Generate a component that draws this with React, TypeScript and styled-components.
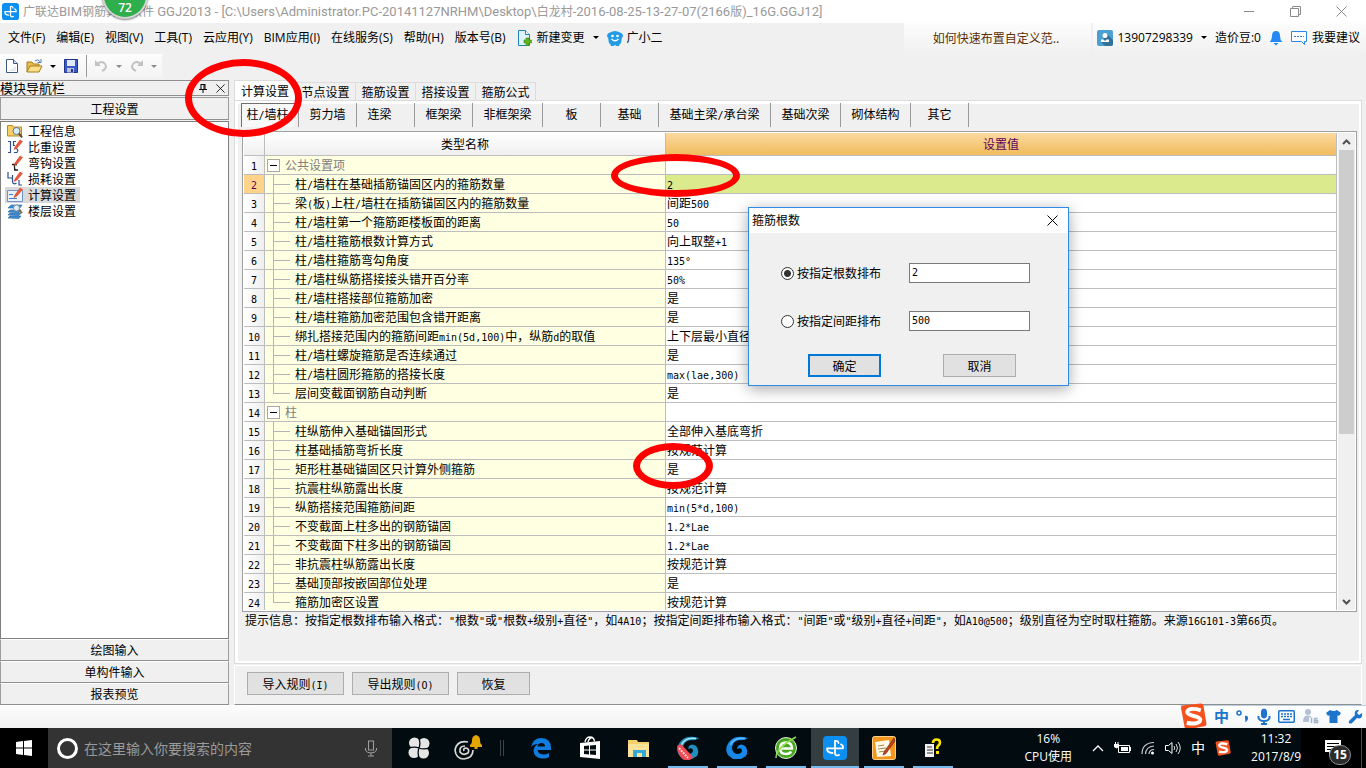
import React from "react";
import styled, { createGlobalStyle, css } from "styled-components";

const GlobalStyle = createGlobalStyle`
  * { box-sizing: border-box; }
  html, body { margin: 0; padding: 0; }
  body { overflow: hidden; }
  button, input { font-family: inherit; font-size: inherit; color: inherit; margin: 0; padding: 0; }
  button { background: none; border: 0; }
  svg { display: block; flex: none; }
`;

const uiFont = `"Open Sans", "Noto Sans CJK SC", sans-serif`;
const songFont = `"Noto Sans CJK SC", "Liberation Sans", sans-serif`;
const face = "#f0f0f0";

/* ---------- text helper: Latin runs sized apart from 12px hanzi ---------- */

const Latin = styled.span`
  font-family: "DejaVu Sans Mono", monospace;
  font-size: 10px;
  line-height: 0;
`;

const TitleLatin = styled.span`
  font-family: Roboto, sans-serif;
  font-size: 13px;
  line-height: 0;
`;

function Mixed({ text, as: Run = Latin }: { text: string; as?: React.ElementType }) {
  const parts = text.split(/([\x20-\x7e°]+)/).filter(Boolean);
  return (
    <>
      {parts.map((p, i) =>
        /^[\x20-\x7e°]+$/.test(p) ? <Run key={i}>{p}</Run> : <React.Fragment key={i}>{p}</React.Fragment>
      )}
    </>
  );
}

/* ---------- shell ---------- */

const Desktop = styled.div`
  position: relative;
  display: flex;
  flex-direction: column;
  height: 100vh;
  overflow: hidden;
  background: ${face};
  color: #000;
  font-family: ${songFont};
  font-size: 12px;
  line-height: 16px;
  white-space: nowrap;
  text-spacing-trim: space-all;
`;

const TitleBar = styled.header`
  display: flex;
  align-items: center;
  flex: none;
  height: 23px;
  padding: 0 18px 0 2px;
  gap: 4px;
  background: #fff;
  color: #999;
  font-family: ${uiFont};
`;

const TitleText = styled.h1`
  flex: 1;
  margin: 0;
  font-size: 12px;
  font-weight: 400;
  line-height: 16px;
`;

const WindowButtons = styled.div`
  display: flex;
  gap: 34px;
`;

const WindowButton = styled.button`
  width: 12px;
  height: 12px;
`;

const MenuBar = styled.nav`
  display: flex;
  align-items: center;
  flex: none;
  height: 29px;
  padding-left: 8px;
  gap: 11px;
  font-family: ${uiFont};
`;

const MenuItem = styled.button`
  display: flex;
  align-items: center;
  gap: 4px;
  line-height: 16px;
`;

const MenuGroup = styled.div`
  display: flex;
  align-items: center;
  gap: 8px;
`;

const MenuSpacer = styled.div`
  flex: 1;
`;

const TipLink = styled.a`
  align-self: stretch;
  display: flex;
  align-items: center;
  justify-content: center;
  width: 187px;
  margin-right: -9px;
  padding-right: 4px;
  background: linear-gradient(#fdfdfd, #f1f1f1);
  color: #5c2e00;
  font-family: ${songFont};
  text-decoration: none;
`;

const AccountBar = styled.div`
  align-self: stretch;
  display: flex;
  align-items: center;
  gap: 8px;
  padding: 0 6px 0 4px;
  background: linear-gradient(#fdfdfd, #f1f1f1);
`;

const Caret = styled.span<{ $dim?: boolean }>`
  width: 0;
  height: 0;
  border: 3px solid transparent;
  border-top-color: ${(p) => (p.$dim ? "#8c8c8c" : "#000")};
  border-bottom: 0;
`;

const ToolStrip = styled.div`
  display: flex;
  align-items: center;
  align-self: flex-start;
  flex: none;
  height: 24px;
  margin: 2px 0;
  padding: 0 5px;
  gap: 7px;
  background: linear-gradient(#fdfdfd, #f3f3f3);
`;

const ToolButton = styled.button`
  display: flex;
  align-items: center;
  gap: 7px;
`;

const ToolDivider = styled.span`
  width: 1px;
  height: 22px;
  background: #9a9a9a;
`;

const Workspace = styled.main`
  display: flex;
  flex: 1;
  min-height: 0;
`;

/* ---------- navigation panel ---------- */

const Sidebar = styled.aside`
  display: flex;
  flex-direction: column;
  flex: none;
  width: 229px;
`;

const SidebarTitle = styled.div`
  display: flex;
  align-items: center;
  flex: none;
  height: 16px;
  padding-right: 3px;
  gap: 9px;
  border: 1px solid #8f8f8f;
  border-left: 0;
  font-size: 13px;
`;

const SidebarTitleText = styled.span`
  flex: 1;
`;

const NavButton = styled.button`
  flex: none;
  height: 22px;
  border: 1px solid #9c9c9c;
  border-top-color: #fff;
  border-bottom-color: #8f8f8f;
  background: ${face};
  line-height: 16px;
`;

const NavHead = styled(NavButton)`
  height: 23px;
  margin: 1px 0;
  border-top-color: #9c9c9c;
`;

const TreeList = styled.ul`
  flex: 1;
  min-height: 0;
  margin: 0;
  padding: 1px 5px;
  overflow: hidden;
  list-style: none;
  background: #fff;
  border: 1px solid #7f7f7f;
`;

const TreeItem = styled.li<{ $on?: boolean }>`
  display: flex;
  align-items: center;
  width: 75px;
  height: 16px;
  gap: 5px;
  margin-left: -1px;
  padding-left: 2px;
  background: ${(p) => (p.$on ? "#d9d9d9" : "transparent")};
`;

/* ---------- main panel ---------- */

const Content = styled.section`
  display: flex;
  flex-direction: column;
  flex: 1;
  min-width: 0;
  margin-left: 5px;
  padding-right: 4px;
`;

const Tabs = styled.div`
  display: flex;
  align-items: flex-end;
  flex: none;
  height: 20px;
`;

const Tab = styled.button<{ $on?: boolean }>`
  width: 60px;
  height: 18px;
  border: 1px solid #dcdcdc;
  border-width: 1px 1px 0 0;
  line-height: 16px;
  ${(p) =>
    p.$on &&
    css`
      width: 62px;
      height: 20px;
      border-left-width: 1px;
      background: #fff;
    `}
`;

const Page = styled.div`
  display: flex;
  flex-direction: column;
  flex: 1;
  min-height: 0;
  padding: 0 4px 0 5px;
  border: 1px solid #dcdcdc;
  box-shadow: inset 3px 3px 0 #fff, inset -2px -2px 0 #fff;
`;

const SubTabs = styled.div`
  display: flex;
  flex: none;
  height: 24px;
  margin: 2px 0 4px;
  padding-left: 1px;
`;

const SubTab = styled.button<{ $w: number; $on?: boolean }>`
  width: ${(p) => p.$w}px;
  padding-bottom: 2px;
  border-right: 1px solid #9a9a9a;
  line-height: 16px;
  white-space: pre;
  ${(p) =>
    p.$on &&
    css`
      padding: 0 4px 2px 0;
      background: linear-gradient(#f8f8f8, #f8f8f8) 0 0 / 53px 100% no-repeat;
      box-shadow: inset 1px 1px 0 #707070;
    `}
`;

const GridFrame = styled.div`
  display: flex;
  flex: 1;
  min-height: 0;
  margin: 0 0 0 2px;
  padding: 1px;
  border: 1px solid #a0a0a0;
  background: #fff;
`;

const GridView = styled.div`
  flex: 1;
  min-width: 0;
  overflow: hidden;
`;

const Table = styled.table`
  width: 100%;
  table-layout: fixed;
  border-collapse: separate;
  border-spacing: 0;
`;

const HeadCell = styled.th<{ $hot?: boolean }>`
  height: 23px;
  padding: 0;
  border: 1px solid #bdbdbd;
  border-width: 0 1px 1px 0;
  background: ${(p) => (p.$hot ? "linear-gradient(#fbd9a0, #f0bc5c)" : "linear-gradient(#fff, #efefef)")};
  color: ${(p) => (p.$hot ? "#600060" : "#000")};
  font-weight: 400;
`;

const cell = css`
  height: 19px;
  padding: 0;
  border: 1px solid #bdbdbd;
  border-width: 0 1px 1px 0;
  line-height: 16px;
  text-align: left;
  font-weight: 400;
  overflow: hidden;
`;

const NumCell = styled.th<{ $on?: boolean }>`
  ${cell}
  text-align: center;
  background: ${(p) => (p.$on ? "#ffd38a" : "linear-gradient(90deg, #fff, #efefef)")};
  color: ${(p) => (p.$on ? "#600060" : "#000")};
`;

const NameCell = styled.td`
  ${cell}
  background: #ffffe1;
`;

const ValueCell = styled.td<{ $on?: boolean }>`
  ${cell}
  padding-left: 1px;
  background: ${(p) => (p.$on ? "#dbea8d" : "#fff")};
`;

const NameRow = styled.div`
  display: flex;
  align-items: center;
  height: 18px;
`;

const Branch = styled.span<{ $last?: boolean }>`
  align-self: stretch;
  width: 17px;
  margin: 0 5px 0 8px;
  background:
    linear-gradient(#b4b4b4, #b4b4b4) 0 0 / 1px ${(p) => (p.$last ? "10px" : "100%")} no-repeat,
    linear-gradient(#b4b4b4, #b4b4b4) 0 9px / 17px 1px no-repeat;
`;

const Toggle = styled.button`
  display: flex;
  align-items: center;
  justify-content: center;
  width: 13px;
  height: 13px;
  margin: 0 5px 0 2px;
  border: 1px solid #a8a8a8;
  background: #fff;
`;

const ToggleBar = styled.span`
  width: 7px;
  height: 1px;
  background: #000;
`;

const GroupName = styled.span`
  color: #808080;
`;

const ScrollBar = styled.div`
  display: flex;
  flex-direction: column;
  flex: none;
  width: 17px;
  margin-left: 1px;
  background: #f0f0f0;
`;

const ScrollButton = styled.button`
  display: flex;
  align-items: center;
  justify-content: center;
  flex: none;
  height: 17px;
`;

const ScrollTrack = styled.div`
  flex: 1;
`;

const ScrollThumb = styled.div`
  height: 64%;
  margin: 0 1px;
  background: #cdcdcd;
`;

const Hint = styled.p`
  flex: none;
  height: 51px;
  margin: 0;
  padding-left: 5px;
`;

const ActionBar = styled.div`
  display: flex;
  flex: none;
  height: 40px;
  margin-top: 1px;
  padding: 6px 12px;
  gap: 8px;
  border: 1px solid #fff;
  border-bottom-color: #8f8f8f;
`;

const PushButton = styled.button<{ $w: number; $primary?: boolean }>`
  width: ${(p) => p.$w}px;
  height: 23px;
  border: ${(p) => (p.$primary ? "2px solid #0078d7" : "1px solid #adadad")};
  background: #e1e1e1;
  line-height: 16px;
`;

/* ---------- dialog ---------- */

const Dialog = styled.form`
  position: absolute;
  left: 748px;
  top: 207px;
  width: 321px;
  border: 1px solid #2f8be6;
  background: ${face};
  box-shadow: 0 3px 14px rgba(0, 0, 0, 0.35);
`;

const DialogTitle = styled.div`
  display: flex;
  align-items: center;
  justify-content: space-between;
  height: 25px;
  padding: 0 9px 0 3px;
  background: #fff;
  font-family: ${uiFont};
`;

const DialogBody = styled.div`
  display: flex;
  flex-direction: column;
  gap: 28px;
  padding: 30px 38px 23px 32px;
`;

const Field = styled.div`
  display: flex;
  align-items: center;
  justify-content: space-between;
`;

const RadioLabel = styled.label`
  display: flex;
  align-items: center;
  gap: 3px;
`;

const Radio = styled.input`
  appearance: none;
  width: 13px;
  height: 13px;
  border: 1px solid #333;
  border-radius: 50%;
  background: #fff;
  &:checked {
    background: radial-gradient(circle, #333 3px, #fff 4px);
  }
`;

const TextBox = styled.input`
  width: 121px;
  height: 20px;
  padding: 0 0 2px 2px;
  border: 1px solid #7a7a7a;
  background: #fff;
  font-family: "DejaVu Sans Mono", monospace;
  font-size: 10px;
`;

const DialogActions = styled.div`
  display: flex;
  gap: 62px;
  padding: 0 0 8px 59px;
`;

/* ---------- input method strip ---------- */

const StatusStrip = styled.div`
  display: flex;
  justify-content: flex-end;
  flex: none;
  height: 23px;
  background: linear-gradient(#fdfdfd, #f0f0f0);
`;

const ImeBar = styled.div`
  display: flex;
  align-items: center;
  gap: 7px;
  padding: 0 3px 2px 0;
  border-top: 1px solid #b9cfe4;
  background: linear-gradient(#fff, #f4f6f8);
  color: #1c74cc;
  font-size: 15px;
  font-weight: 700;
`;

/* ---------- task bar ---------- */

const TaskBar = styled.footer`
  display: flex;
  flex: none;
  height: 40px;
  background: #020c10;
  color: #fff;
  font-family: ${uiFont};
`;

const StartButton = styled.button`
  display: flex;
  align-items: center;
  justify-content: center;
  width: 48px;
  background: #000;
`;

const SearchBox = styled.label`
  display: flex;
  align-items: center;
  width: 344px;
  padding: 0 14px 0 8px;
  gap: 5px;
  background: #333;
`;

const SearchInput = styled.input`
  flex: 1;
  min-width: 0;
  border: 0;
  outline: 0;
  background: none;
  font-size: 14px;
  &::placeholder {
    color: #9a9a9a;
    opacity: 1;
  }
`;

const Apps = styled.div`
  display: flex;
  gap: 1px;
  padding-left: 3px;
`;

const AppButton = styled.button<{ $active?: boolean; $open?: boolean }>`
  display: flex;
  align-items: center;
  justify-content: center;
  width: 48px;
  background: ${(p) => (p.$active ? "#343d40" : "transparent")};
  ${(p) =>
    p.$open &&
    css`
      background-image: linear-gradient(#76b9ed, #76b9ed);
      background-size: ${p.$active ? "48px" : "40px"} 2px;
      background-position: bottom center;
      background-repeat: no-repeat;
    `}
`;

const AppDivider = styled.span`
  align-self: center;
  width: 4px;
  height: 16px;
  margin: 0 12px 0 7px;
  border: 1px solid #3c4447;
  border-width: 0 1px;
`;

const TaskSpacer = styled.div`
  flex: 1;
`;

const TwoLines = styled.div`
  align-self: center;
  text-align: center;
  line-height: 18px;
`;

const Tray = styled.div`
  display: flex;
  align-items: center;
  gap: 10px;
  padding: 0 20px;
`;

const TrayText = styled.span`
  font-size: 14px;
`;

const Notice = styled.button`
  position: relative;
  display: flex;
  align-items: center;
  width: 65px;
  padding-left: 24px;
  background: #000;
  box-shadow: inset -4px 0 0 #000, inset -5px 0 0 #4a4a4a;
`;

const NoticeCount = styled.span`
  position: absolute;
  left: 28px;
  top: 17px;
  width: 22px;
  height: 20px;
  border: 1px solid #8f8f8f;
  border-radius: 10px;
  background: #2b2b2b;
  font-size: 12px;
  font-weight: 700;
  line-height: 18px;
  text-align: center;
`;

/* ---------- overlays ---------- */

const SpeedBall = styled.div`
  position: absolute;
  left: 102px;
  top: -28px;
  display: flex;
  align-items: flex-end;
  justify-content: center;
  width: 46px;
  height: 47px;
  padding-bottom: 1px;
  border: 2px solid #d5d5d5;
  border-radius: 50%;
  background: #2fae4c;
  box-shadow: 0 1px 2px rgba(0, 0, 0, 0.5);
  color: #fff;
  font-family: ${uiFont};
  font-weight: 600;
`;

const Ring = styled.div<{ $x: number; $y: number; $w: number; $h: number }>`
  position: absolute;
  left: ${(p) => p.$x}px;
  top: ${(p) => p.$y}px;
  width: ${(p) => p.$w}px;
  height: ${(p) => p.$h}px;
  border: 7px solid #f00;
  border-radius: 50%;
  pointer-events: none;
`;

/* ---------- drawings ---------- */

const AppLogo = ({ size }: { size: number }) => (
  <svg width={size} height={size} viewBox="0 0 24 24">
    <rect width="24" height="24" rx="4" fill="#0b8ff0" />
    <path d="M15.500 7Q15.500 4.500 12 5V17q0 3.500 4 2M4 12.300H20M4 12.300q0 4.700 5.500 4.700M20 12.300q.3-3.300-2-4" fill="none" stroke="#fff" strokeWidth="1.800" strokeLinecap="round" />
  </svg>
);

const NewDocIcon = () => (
  <svg width="14" height="16" viewBox="0 0 14 16">
    <path d="M1.500 1.500h7l4 4v9h-11z" fill="#fff" stroke="#3c5a7c" />
    <path d="M8.500 1.500v4h4" fill="#cfe0f2" stroke="#3c5a7c" />
    <path d="M3 13h8V8z" fill="#e4edf6" />
  </svg>
);

const OpenIcon = () => (
  <svg width="17" height="16" viewBox="0 0 17 16">
    <path d="M1 14V4h5l1.500 2H13v3" fill="#e8bc4c" stroke="#a97b1b" />
    <path d="M1 14L4 8h12l-3 6z" fill="#fbe08c" stroke="#a97b1b" />
    <path d="M9 3q3-2.500 5 .5M15 1v3.500h-3.500" fill="none" stroke="#4d7fb5" />
  </svg>
);

const SaveIcon = () => (
  <svg width="16" height="16" viewBox="0 0 16 16">
    <path d="M1.500 1.500h13v13h-13z" fill="#3b58c8" stroke="#22338a" />
    <path d="M4 2h8v6H4z" fill="#dfe9fa" />
    <path d="M4 10h7v4.500H4z" fill="#b9c4dc" />
    <path d="M8 11h2v3H8z" fill="#22338a" />
  </svg>
);

const UndoIcon = ({ flip }: { flip?: boolean }) => (
  <svg width="15" height="14" viewBox="0 0 15 14">
    <g transform={flip ? "translate(15 0) scale(-1 1)" : undefined}>
      <path d="M3 5q5-4 8 0t-3 7" fill="none" stroke="#c2c2c2" strokeWidth="2" />
      <path d="M1 1v6h6z" fill="#c2c2c2" />
    </g>
  </svg>
);

const NewChangeIcon = () => (
  <svg width="16" height="16" viewBox="0 0 16 16">
    <path d="M1.500.5h7l4 4v11h-11z" fill="#dff1fb" stroke="#1f83b8" />
    <path d="M8.500.5v4h4" fill="#fff" stroke="#1f83b8" />
    <path d="M9 8h3v2h2.500v3H12v2.500H9V13H7v-3h2z" fill="#5fb321" stroke="#3c8a12" strokeWidth=".6" />
  </svg>
);

const MascotIcon = () => (
  <svg width="16" height="16" viewBox="0 0 16 16">
    <path d="M3 2.500Q8-.5 13 2.500q3 1 3 3.500l-1.500 3q.5 4-2 5.500L12 16H9.500L8 15l-1.500 1H4l-.5-1.500Q1 13 1.500 9L0 6q0-2.500 3-3.500z" fill="#239be6" />
    <circle cx="5.500" cy="6" r="1.300" fill="#fff" />
    <circle cx="10.500" cy="6" r="1.300" fill="#fff" />
    <path d="M4.500 9q3.500 3.500 7 0" fill="none" stroke="#fff" strokeWidth="1.200" />
  </svg>
);

const UserIcon = () => (
  <svg width="16" height="16" viewBox="0 0 16 16">
    <rect width="16" height="16" rx="2" fill="#4b9fd2" />
    <path d="M10 4l6 6v4q0 2-2 2H8l-4-4z" fill="#32739b" />
    <circle cx="8" cy="5.500" r="2.500" fill="#fff" />
    <path d="M4 12V9.500h2.500L8 11l1.500-1.500H12V12z" fill="#fff" />
  </svg>
);

const BellIcon = () => (
  <svg width="14" height="16" viewBox="0 0 14 16">
    <path d="M7 1q4 0 4 5 0 4 2.500 6H.5Q3 10 3 6q0-5 4-5zM4.500 13h5L7 15.500z" fill="#2488f5" />
  </svg>
);

const ChatIcon = () => (
  <svg width="17" height="16" viewBox="0 0 17 16">
    <path d="M.5 1.500h15v10h-2v3l-3-3H.500z" fill="#fff" stroke="#2d86e8" />
    <path d="M3 6.500h10" stroke="#2d86e8" strokeDasharray="2 1" />
  </svg>
);

const Pencil = () => <path d="M8 8L13 1l2.500 1.500L10 9l-3 1.500z" fill="#f0553a" stroke="#b93820" strokeWidth=".5" />;

const treeIcons: Record<string, React.ReactNode> = {
  info: (
    <>
      <path d="M.5 2.500h5l1 1.500h8v9H.5z" fill="#f6cf62" stroke="#b98a20" />
      <circle cx="9.500" cy="8" r="3.500" fill="#dbeafa" stroke="#5577a8" />
      <path d="M12 10.500l3 4" stroke="#5a4630" strokeWidth="2" />
    </>
  ),
  ratio: (
    <>
      <path d="M1 2.500h2.500v11H1M9 2.500H6.500v4H8M7 13.500h3q2-3-1-4" fill="none" stroke="#2f4f8c" strokeWidth="1.200" />
      <Pencil />
    </>
  ),
  hook: (
    <>
      <path d="M7.500 9v4q0 2 2 2M5 9.500h5M7 15h4" fill="none" stroke="#222" strokeWidth="1.300" />
      <Pencil />
    </>
  ),
  loss: (
    <>
      <path d="M1 1v6h4M5.500 4v7q1 3 4 1M12 9v5h3" fill="none" stroke="#2f4f8c" strokeWidth="1.200" />
      <Pencil />
    </>
  ),
  calc: (
    <>
      <path d="M.5 3.500h15v11H.5z" fill="#e8f1fc" stroke="#6f93c8" />
      <path d="M2 7.500h4M2 11.500h8" stroke="#4b79bf" />
      <Pencil />
    </>
  ),
  floor: (
    <>
      <path d="M1 5l3-3h11l-2 3zM1 9l2-2h11l-2 2.500zM1 12l2-2h11l-2 2.500zM1 15l2-2h11l-2 2.500z" fill="#3f8fd4" stroke="#23639f" strokeWidth=".6" />
      <circle cx="9.500" cy="5" r="3" fill="#e2effa" stroke="#7b93ab" />
      <path d="M12 7l3 3" stroke="#8a6a3a" strokeWidth="2" />
    </>
  ),
};

const TreeIcon = ({ kind }: { kind: string }) => (
  <svg width="16" height="16" viewBox="0 0 16 16">
    {treeIcons[kind]}
  </svg>
);

const CloseIcon = ({ size, color }: { size: number; color: string }) => (
  <svg width={size} height={size} viewBox="0 0 11 11">
    <path d="M.5.5l10 10M10.500.5l-10 10" stroke={color} />
  </svg>
);

const PinIcon = () => (
  <svg width="8" height="9" viewBox="0 0 8 9">
    <path d="M2 0v5M5 0v5M2 .5h4M0 5.500h8M4 5v4M6 0v5" fill="none" stroke="#000" />
  </svg>
);

const Chevron = ({ down }: { down?: boolean }) => (
  <svg width="9" height="6" viewBox="0 0 9 6">
    <path d={down ? "M1 1l3.500 3.500L8 1" : "M1 5l3.500-3.500L8 5"} fill="none" stroke="#505050" strokeWidth="2" />
  </svg>
);

const SogouLogo = ({ size }: { size: number }) => (
  <svg width={size} height={size} viewBox="0 0 26 26">
    <path d="M1 5q-.5-2 1.500-2.500L20 .5q2 0 2.500 1.500L25.500 20q0 2-2 2.500L7 25.500q-2 0-2.500-2z" fill="#f4511e" />
    <path d="M20 7C14 5 6.500 5 7 9S19 12 19.500 16 12 20.500 6.500 19" fill="none" stroke="#fff" strokeWidth="3.800" />
  </svg>
);

const imeBlue = "#1c74cc";

const MicIcon = ({ color, filled }: { color: string; filled?: boolean }) => (
  <svg width="14" height="17" viewBox="0 0 14 17">
    <rect x="4.500" y="1" width="5" height="9" rx={filled ? 2.5 : 0} fill={filled ? color : "none"} stroke={color} />
    <path d="M1.500 8v2q1 3 5.500 3t5.500-3V8M7 13v3M4 16h6" fill="none" stroke={color} strokeWidth={filled ? 2 : 1} />
  </svg>
);

const WindowsIcon = () => (
  <svg width="16" height="16" viewBox="0 0 16 16">
    <path d="M0 2l7-1v6.500H0zM8 1l8-1v7.500H8zM0 8.500h7V15l-7-1zM8 8.500h8V16l-8-1z" fill="#fff" />
  </svg>
);

const FanIcon = () => (
  <svg width="22" height="22" viewBox="0 0 22 22">
    <g fill="#e6e6e6">
      <circle cx="6.500" cy="6" r="5.500" />
      <circle cx="16" cy="6.500" r="5.500" />
      <circle cx="15.500" cy="16" r="5.500" />
      <circle cx="6" cy="15.500" r="5.500" />
      <path d="M7 7h8v8H7z" />
    </g>
    <path
      d="M11 11Q13 6 10.500 0M11 11Q16 13 22 10.500M11 11Q9 16 11.500 22M11 11Q6 9 0 11.500"
      fill="none"
      stroke="#020c10"
      strokeWidth="1.300"
    />
  </svg>
);

const SwirlBellIcon = () => (
  <svg width="30" height="28" viewBox="0 0 30 28">
    <path d="M15 8Q4 6 2 16q1 9 9 9 9-1 9-9M12 12q-6 0-5 6 3 4 8 1 2-4-2-5-3 0-2 3" fill="none" stroke="#d8d8d8" strokeWidth="1.700" />
    <path d="M17 11q2-1 2-5t4-5q4 1 4 5t2 5v2H17zM21.500 13h3v2h-3z" fill="#e3a500" />
  </svg>
);

const EdgeIcon = () => (
  <svg width="22" height="22" viewBox="0 0 22 22">
    <path d="M1 10Q3 1 11.500 1 21 1.500 21 11v2H7.500q.5 4 6 4.500 3 0 5.500-1.500v4q-3 2-7 1.500-8-.5-8.500-8Q4 9 8 7q-5 0-7 3zM7.500 9.500H15Q15 6 11.500 6 8 6 7.500 9.500z" fill="#0f7ce0" />
  </svg>
);

const StoreIcon = () => (
  <svg width="22" height="24" viewBox="0 0 22 24">
    <path d="M1 7l20-2v18L1 21z" fill="#fff" />
    <path d="M6 6q1-5 5-5 4 0 4.500 4.500M9 6q1-4 4-4.500" fill="none" stroke="#fff" strokeWidth="1.300" />
    <path d="M5 10l5-.5v4H5zM11 9.500l6-.5v4.500h-6zM5 14.500h5v4l-5-.5zM11 14.500h6V19l-6-.5z" fill="#020c10" />
  </svg>
);

const ExplorerIcon = () => (
  <svg width="22" height="19" viewBox="0 0 22 19">
    <path d="M0 1h9l1 2h11v15H0z" fill="#f5cf6c" />
    <path d="M0 5h21v13H0z" fill="#fde398" />
    <path d="M5 18v-7h13v7h-4v-4H9v4z" fill="#36a7dd" />
  </svg>
);

const WaveG = ({ sash }: { sash?: boolean }) => (
  <svg width="24" height="24" viewBox="0 0 24 24">
    <path d="M23 2Q10-2 4 6-1 13 3 19l5 4h8l5-3q3-6-1-10-4-3-7 0l-1 3q4-2 5 1 0 4-5 4-5-1-5-7Q8 5 15 4q4 1 8-2z" fill={sash ? "#1f8fc0" : "#1788e8"} />
    <path d="M20 2.500Q9 1 5.500 9" fill="none" stroke={sash ? "#a6e4ee" : "#62bdff"} strokeWidth="1.500" />
    {sash && <path d="M1 10l4-2 12 13-3 3H8Q2 21 1 10z" fill="#ef4b56" />}
    {sash && <path d="M3 12l9 10" stroke="#ffd5d8" strokeWidth="2" strokeDasharray="2 1" />}
  </svg>
);

const GreenBrowserIcon = () => (
  <svg width="24" height="24" viewBox="0 0 24 24">
    <circle cx="12" cy="12" r="10.500" fill="#47a51f" stroke="#dff0d4" />
    <path d="M6 12.500h12Q18 6.500 12 6.500T6 12.500q0 5.500 6 5.500 4 0 5-2.500" fill="none" stroke="#fff" strokeWidth="2.500" />
    <path d="M2 22Q2 12 22 1" fill="none" stroke="#8ee04e" strokeWidth="1.500" />
  </svg>
);

const NotesIcon = () => (
  <svg width="24" height="24" viewBox="0 0 24 24">
    <rect x=".5" y=".5" width="23" height="23" rx="2" fill="#f5961c" stroke="#ffd08a" />
    <path d="M3 6l14-2 2 16-14 1z" fill="#fffbe8" />
    <path d="M6 10l6-1M6 13l8-1M7 16l6-1" stroke="#a8854b" />
    <path d="M22 2L12 16l-1 3 3-1.500L23 5z" fill="#c2451c" stroke="#5c200c" strokeWidth=".6" />
  </svg>
);

const HelpDocIcon = () => (
  <svg width="18" height="20" viewBox="0 0 18 20">
    <path d="M1 6h9v13H1z" fill="#f2f2f2" />
    <path d="M3 9h5M3 12h6M3 15h6" stroke="#333" />
    <path d="M9 5q0-3.500 3.500-3.500T16 4.500q0 2-2 3.500-1 1-1 3" fill="none" stroke="#ffe600" strokeWidth="2.600" />
    <path d="M12 13h3v3h-3z" fill="#ffe600" />
  </svg>
);

/* ---------- data ---------- */

const title =
  "广联达BIM钢筋算量软件 GGJ2013 - [C:\\Users\\Administrator.PC-20141127NRHM\\Desktop\\白龙村-2016-08-25-13-27-07(2166版)_16G.GGJ12]";

const menus = ["文件(F)", "编辑(E)", "视图(V)", "工具(T)", "云应用(Y)", "BIM应用(I)", "在线服务(S)", "帮助(H)", "版本号(B)"];

const treeItems = [
  { kind: "info", text: "工程信息" },
  { kind: "ratio", text: "比重设置" },
  { kind: "hook", text: "弯钩设置" },
  { kind: "loss", text: "损耗设置" },
  { kind: "calc", text: "计算设置" },
  { kind: "floor", text: "楼层设置" },
];

const tabs = ["计算设置", "节点设置", "箍筋设置", "搭接设置", "箍筋公式"];

const subTabs: [string, number][] = [
  ["柱/墙柱", 58],
  ["剪力墙", 58],
  ["连梁  ", 58],
  ["框架梁", 58],
  ["非框架梁", 70],
  ["板", 58],
  ["基础", 58],
  ["基础主梁/承台梁", 112],
  ["基础次梁", 70],
  ["砌体结构", 70],
  ["其它", 58],
];

type Row = { name: string; value?: string; group?: boolean; last?: boolean };

const rows: Row[] = [
  { name: "公共设置项", group: true },
  { name: "柱/墙柱在基础插筋锚固区内的箍筋数量", value: "2" },
  { name: "梁(板)上柱/墙柱在插筋锚固区内的箍筋数量", value: "间距500" },
  { name: "柱/墙柱第一个箍筋距楼板面的距离", value: "50" },
  { name: "柱/墙柱箍筋根数计算方式", value: "向上取整+1" },
  { name: "柱/墙柱箍筋弯勾角度", value: "135°" },
  { name: "柱/墙柱纵筋搭接接头错开百分率", value: "50%" },
  { name: "柱/墙柱搭接部位箍筋加密", value: "是" },
  { name: "柱/墙柱箍筋加密范围包含错开距离", value: "是" },
  { name: "绑扎搭接范围内的箍筋间距min(5d,100)中，纵筋d的取值", value: "上下层最小直径" },
  { name: "柱/墙柱螺旋箍筋是否连续通过", value: "是" },
  { name: "柱/墙柱圆形箍筋的搭接长度", value: "max(lae,300)" },
  { name: "层间变截面钢筋自动判断", value: "是", last: true },
  { name: "柱", group: true },
  { name: "柱纵筋伸入基础锚固形式", value: "全部伸入基底弯折" },
  { name: "柱基础插筋弯折长度", value: "按规范计算" },
  { name: "矩形柱基础锚固区只计算外侧箍筋", value: "是" },
  { name: "抗震柱纵筋露出长度", value: "按规范计算" },
  { name: "纵筋搭接范围箍筋间距", value: "min(5*d,100)" },
  { name: "不变截面上柱多出的钢筋锚固", value: "1.2*Lae" },
  { name: "不变截面下柱多出的钢筋锚固", value: "1.2*Lae" },
  { name: "非抗震柱纵筋露出长度", value: "按规范计算" },
  { name: "基础顶部按嵌固部位处理", value: "是" },
  { name: "箍筋加密区设置", value: "按规范计算", last: true },
];

const selectedRow = 1;

const hint =
  '提示信息：按指定根数排布输入格式："根数"或"根数+级别+直径"，如4A10；按指定间距排布输入格式："间距"或"级别+直径+间距"，如A10@500；级别直径为空时取柱箍筋。来源16G101-3第66页。';

/* ---------- sections ---------- */

const Header = () => (
  <>
    <TitleBar>
      <AppLogo size={17} />
      <TitleText>
        <Mixed text={title} as={TitleLatin} />
      </TitleText>
      <WindowButtons>
        <WindowButton aria-label="最小化">
          <svg width="11" height="11" viewBox="0 0 11 11">
            <path d="M0 5.500h10" stroke="#8a8a8a" />
          </svg>
        </WindowButton>
        <WindowButton aria-label="还原">
          <svg width="11" height="11" viewBox="0 0 11 11">
            <path d="M.5 2.500h8v8h-8zM2.500 2.500v-2h8v8h-2" fill="none" stroke="#8a8a8a" />
          </svg>
        </WindowButton>
        <WindowButton aria-label="关闭">
          <CloseIcon size={11} color="#8a8a8a" />
        </WindowButton>
      </WindowButtons>
    </TitleBar>
    <MenuBar>
      {menus.map((m) => (
        <MenuItem key={m}>{m}</MenuItem>
      ))}
      <MenuGroup>
        <MenuItem>
          <NewChangeIcon />
          新建变更
        </MenuItem>
        <Caret />
        <MenuItem>
          <MascotIcon />
          广小二
        </MenuItem>
      </MenuGroup>
      <MenuSpacer />
      <TipLink href="#tip">如何快速布置自定义范..</TipLink>
      <AccountBar>
        <MenuItem>
          <UserIcon />
          13907298339
        </MenuItem>
        <Caret />
        <MenuItem>造价豆:0</MenuItem>
        <BellIcon />
        <MenuItem>
          <ChatIcon />
          我要建议
        </MenuItem>
      </AccountBar>
    </MenuBar>
    <ToolStrip>
      <ToolButton aria-label="新建">
        <NewDocIcon />
      </ToolButton>
      <ToolButton aria-label="打开">
        <OpenIcon />
        <Caret />
      </ToolButton>
      <ToolButton aria-label="保存">
        <SaveIcon />
      </ToolButton>
      <ToolDivider />
      <ToolButton aria-label="撤销">
        <UndoIcon />
        <Caret $dim />
      </ToolButton>
      <ToolButton aria-label="恢复操作">
        <UndoIcon flip />
        <Caret $dim />
      </ToolButton>
    </ToolStrip>
  </>
);

const Navigator = () => (
  <Sidebar>
    <SidebarTitle>
      <SidebarTitleText>模块导航栏</SidebarTitleText>
      <PinIcon />
      <CloseIcon size={9} color="#000" />
    </SidebarTitle>
    <NavHead>工程设置</NavHead>
    <TreeList>
      {treeItems.map((t) => (
        <TreeItem key={t.text} $on={t.kind === "calc"}>
          <TreeIcon kind={t.kind} />
          {t.text}
        </TreeItem>
      ))}
    </TreeList>
    <NavButton>绘图输入</NavButton>
    <NavButton>单构件输入</NavButton>
    <NavButton>报表预览</NavButton>
  </Sidebar>
);

const SettingsGrid = () => (
  <GridFrame>
    <GridView>
      <Table>
        <colgroup>
          <col style={{ width: 21 }} />
          <col style={{ width: 401 }} />
          <col />
        </colgroup>
        <thead>
          <tr>
            <HeadCell />
            <HeadCell>类型名称</HeadCell>
            <HeadCell $hot>设置值</HeadCell>
          </tr>
        </thead>
        <tbody>
          {rows.map((r, i) => (
            <tr key={i}>
              <NumCell scope="row" $on={i === selectedRow}>
                <Latin>{i + 1}</Latin>
              </NumCell>
              <NameCell>
                <NameRow>
                  {r.group ? (
                    <Toggle aria-label="折叠">
                      <ToggleBar />
                    </Toggle>
                  ) : (
                    <Branch $last={r.last} />
                  )}
                  {r.group ? (
                    <GroupName>{r.name}</GroupName>
                  ) : (
                    <span>
                      <Mixed text={r.name} />
                    </span>
                  )}
                </NameRow>
              </NameCell>
              <ValueCell $on={i === selectedRow}>
                <Mixed text={r.value ?? ""} />
              </ValueCell>
            </tr>
          ))}
        </tbody>
      </Table>
    </GridView>
    <ScrollBar>
      <ScrollButton aria-label="向上滚动">
        <Chevron />
      </ScrollButton>
      <ScrollTrack>
        <ScrollThumb />
      </ScrollTrack>
      <ScrollButton aria-label="向下滚动">
        <Chevron down />
      </ScrollButton>
    </ScrollBar>
  </GridFrame>
);

const CountDialog = () => (
  <Dialog onSubmit={(e) => e.preventDefault()}>
    <DialogTitle>
      箍筋根数
      <WindowButton type="button" aria-label="关闭对话框">
        <CloseIcon size={11} color="#000" />
      </WindowButton>
    </DialogTitle>
    <DialogBody>
      <Field>
        <RadioLabel>
          <Radio type="radio" name="mode" defaultChecked />
          按指定根数排布
        </RadioLabel>
        <TextBox aria-label="根数" defaultValue="2" />
      </Field>
      <Field>
        <RadioLabel>
          <Radio type="radio" name="mode" />
          按指定间距排布
        </RadioLabel>
        <TextBox aria-label="间距" defaultValue="500" />
      </Field>
    </DialogBody>
    <DialogActions>
      <PushButton $w={73} $primary>
        确定
      </PushButton>
      <PushButton type="button" $w={73}>
        取消
      </PushButton>
    </DialogActions>
  </Dialog>
);

const InputMethod = () => (
  <StatusStrip>
    <ImeBar>
      <SogouLogo size={27} />
      <span>中</span>
      <svg width="14" height="14" viewBox="0 0 14 14">
        <circle cx="3" cy="4" r="2" fill="none" stroke={imeBlue} strokeWidth="1.500" />
        <path d="M9 7q3-1 3 2t-3 4q1-2 0-3z" fill={imeBlue} />
      </svg>
      <MicIcon color={imeBlue} filled />
      <svg width="17" height="13" viewBox="0 0 17 13">
        <rect x=".75" y=".75" width="15.500" height="11.500" rx="1" fill="#fff" stroke={imeBlue} strokeWidth="1.500" />
        <path d="M3 4h11M3 6.500h11" stroke={imeBlue} strokeWidth="1.500" strokeDasharray="2 1" />
        <path d="M5 9.500h7" stroke={imeBlue} strokeWidth="1.500" />
      </svg>
      <svg width="17" height="16" viewBox="0 0 17 16">
        <circle cx="6" cy="4" r="3" fill="#b4c0d4" />
        <path d="M1 14Q1 7 6 7.500q3 0 4 2H7v4.500z" fill="#b4c0d4" />
        <path d="M9.500 10v5M12.500 10.500v4h3v-2h-3M12.500 10.500h3" fill="none" stroke="#a3b1c9" strokeWidth="1.500" />
      </svg>
      <svg width="15" height="14" viewBox="0 0 15 14">
        <path d="M4 1q3.500 2 7 0l4 3-2 3-1.500-1v8h-8V6L2 7 0 4z" fill={imeBlue} />
      </svg>
      <svg width="15" height="15" viewBox="0 0 15 15">
        <path d="M1 12l6-6Q6 2 9 1l2 0-2 3 2 2 3-2q1 5-3 5.500L9 9l-5.500 5.500Q0 15 1 12z" fill={imeBlue} />
      </svg>
    </ImeBar>
  </StatusStrip>
);

const Taskbar = () => (
  <TaskBar>
    <StartButton aria-label="开始">
      <WindowsIcon />
    </StartButton>
    <SearchBox>
      <svg width="23" height="23" viewBox="0 0 23 23">
        <circle cx="11.500" cy="11.500" r="9" fill="none" stroke="#fff" strokeWidth="3" />
      </svg>
      <SearchInput aria-label="搜索" placeholder="在这里输入你要搜索的内容" />
      <MicIcon color="#a0a0a0" />
    </SearchBox>
    <Apps>
      <AppButton aria-label="风扇">
        <FanIcon />
      </AppButton>
      <AppButton aria-label="提醒">
        <SwirlBellIcon />
      </AppButton>
      <AppDivider />
      <AppButton aria-label="Edge">
        <EdgeIcon />
      </AppButton>
      <AppButton aria-label="商店">
        <StoreIcon />
      </AppButton>
      <AppButton aria-label="文件资源管理器">
        <ExplorerIcon />
      </AppButton>
      <AppButton aria-label="造价" $open>
        <WaveG sash />
      </AppButton>
      <AppButton aria-label="算量" $open>
        <WaveG />
      </AppButton>
      <AppButton aria-label="浏览器" $open>
        <GreenBrowserIcon />
      </AppButton>
      <AppButton aria-label="钢筋" $open $active>
        <AppLogo size={24} />
      </AppButton>
      <AppButton aria-label="便笺" $open>
        <NotesIcon />
      </AppButton>
      <AppButton aria-label="帮助文档" $open>
        <HelpDocIcon />
      </AppButton>
    </Apps>
    <TaskSpacer />
    <TwoLines>
      16%
      <br />
      CPU使用
    </TwoLines>
    <Tray>
      <svg width="12" height="8" viewBox="0 0 12 8">
        <path d="M1 7l5-5 5 5" fill="none" stroke="#fff" strokeWidth="1.300" />
      </svg>
      <svg width="17" height="12" viewBox="0 0 17 12">
        <path d="M4.500 3.500h11v7h-11z" fill="none" stroke="#fff" />
        <path d="M7 5h7v4H7zM0 2h5v3l-2.500 1.500L0 5zM1 0h1v2H1zM3.500 0h1v2h-1zM16 5h1v4h-1z" fill="#fff" />
      </svg>
      <svg width="14" height="14" viewBox="0 0 14 14">
        <path d="M1 13Q1 2 13 1.500M4.500 13Q5 5.500 13 5M8 13q.5-4.500 5-4.500" fill="none" stroke="#ccc" strokeWidth="1.200" />
        <circle cx="11.500" cy="12" r="1.500" fill="#fff" />
      </svg>
      <svg width="16" height="14" viewBox="0 0 16 14">
        <path d="M.5 4.500h3l3.500-3v11l-3.500-3h-3z" fill="none" stroke="#fff" />
        <path d="M9 5q1.500 2 0 4M11 3q3 4 0 8M13 1q4.500 6 0 12" fill="none" stroke="#ddd" />
      </svg>
      <TrayText>中</TrayText>
      <SogouLogo size={16} />
    </Tray>
    <TwoLines>
      11:32
      <br />
      2017/8/9
    </TwoLines>
    <Notice aria-label="通知">
      <svg width="17" height="17" viewBox="0 0 17 17">
        <path d="M0 0h16v12H8l-4 4v-4H0z" fill="#fff" />
        <path d="M2 3.500h12M2 6.500h12M2 9.500h7" stroke="#000" />
      </svg>
      <NoticeCount>15</NoticeCount>
    </Notice>
  </TaskBar>
);

export default function App() {
  return (
    <Desktop>
      <GlobalStyle />
      <Header />
      <Workspace>
        <Navigator />
        <Content>
          <Tabs>
            {tabs.map((t, i) => (
              <Tab key={t} $on={i === 0}>
                {t}
              </Tab>
            ))}
          </Tabs>
          <Page>
            <SubTabs>
              {subTabs.map(([t, w], i) => (
                <SubTab key={t} $w={w} $on={i === 0}>
                  <Mixed text={t} />
                </SubTab>
              ))}
            </SubTabs>
            <SettingsGrid />
            <Hint>
              <Mixed text={hint} />
            </Hint>
          </Page>
          <ActionBar>
            <PushButton $w={97}>
              <Mixed text="导入规则(I)" />
            </PushButton>
            <PushButton $w={97}>
              <Mixed text="导出规则(O)" />
            </PushButton>
            <PushButton $w={73}>恢复</PushButton>
          </ActionBar>
        </Content>
      </Workspace>
      <InputMethod />
      <Taskbar />
      <CountDialog />
      <SpeedBall>72</SpeedBall>
      <Ring $x={185} $y={59} $w={117} $h={78} />
      <Ring $x={611} $y={154} $w={129} $h={43} />
      <Ring $x={633} $y={443} $w={80} $h={46} />
    </Desktop>
  );
}
